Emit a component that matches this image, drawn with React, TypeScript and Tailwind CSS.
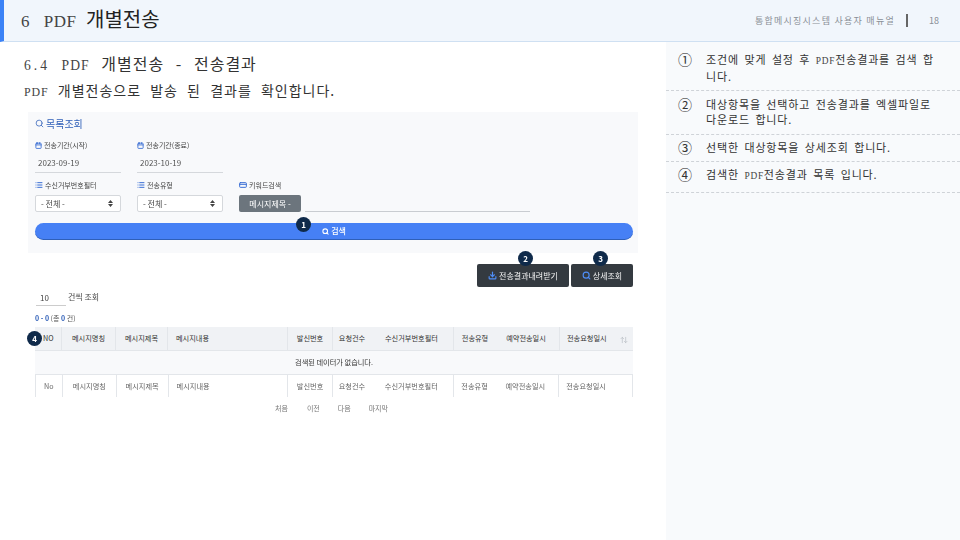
import { Calendar, List, Search, Download, CreditCard, ArrowUpDown } from "lucide-react";

const SANS = "font-['Noto_Sans_CJK_KR',sans-serif]";

const notes = [
  { mark: "①", lines: [["조건에 맞게 설정 후 ", "PDF", "전송결과를 검색 합"], ["니다."]], cls: "h-[49px] pt-[10px]" },
  { mark: "②", lines: [["대상항목을 선택하고 전송결과를 엑셀파일로"], ["다운로드 합니다."]], cls: "h-[44px] pt-[6px]" },
  { mark: "③", lines: [["선택한 대상항목을 상세조회 합니다."]], cls: "h-[27px] pt-[5px]" },
  { mark: "④", lines: [["검색한 ", "PDF", "전송결과 목록 입니다."]], cls: "h-[31px] pt-[5px]" },
];

const columns = [
  { label: "NO", row: "No", cls: "w-[27px] pl-[8px]", line: true },
  { label: "메시지명칭", row: "메시지명칭", cls: "w-[54px] justify-center", line: true },
  { label: "메시지제목", row: "메시지제목", cls: "w-[52px] justify-center", line: true },
  { label: "메시지내용", row: "메시지내용", cls: "w-[120px] pl-[8px]", line: true },
  { label: "발신번호", row: "발신번호", cls: "w-[45px] justify-center", line: true },
  { label: "요청건수", row: "요청건수", cls: "w-[38px] justify-center", line: false },
  { label: "수신거부번호필터", row: "수신거부번호필터", cls: "w-[83px] pl-[14px]", line: true },
  { label: "전송유형", row: "전송유형", cls: "w-[42px] justify-center", line: false },
  { label: "예약전송일시", row: "예약전송일시", cls: "w-[64px] justify-center pr-[3px]", line: true },
  { label: "전송요청일시", row: "전송요청일시", cls: "w-[73px] pl-[7px]", line: false },
];

// latin runs in the headings use a small, light typewriter look
function Latin({ children, className = "tracking-[0.08em] [word-spacing:0.6em]" }: { children: React.ReactNode; className?: string }) {
  return <span className={`font-['Liberation_Serif',serif] text-[0.85em] text-[#444] ${className}`}>{children}</span>;
}

function Badge({ n, className }: { n: number; className: string }) {
  return (
    <span
      className={`absolute flex h-[15px] w-[15px] items-center justify-center rounded-full bg-[#0f2a4a] text-[8px] font-bold text-white ${className}`}
    >
      {n}
    </span>
  );
}

function FieldLabel({ icon, text }: { icon: React.ReactNode; text: string }) {
  return (
    <div className="flex h-[10px] items-center gap-[2px] text-[7px] leading-none text-[#444]">
      {icon}
      <span>{text}</span>
    </div>
  );
}

function DateField({ label, value }: { label: string; value: string }) {
  return (
    <div className="w-[86px]">
      <FieldLabel icon={<Calendar size={7} strokeWidth={3} className="text-[#3b6fd4]" />} text={label} />
      <div className="mt-[8px] h-[15px] border-b border-[#d5d8dc] pl-[3px] text-[8px] leading-[10px] text-[#555]">
        {value}
      </div>
    </div>
  );
}

function SelectField({ label }: { label: string }) {
  return (
    <div className="w-[86px]">
      <FieldLabel icon={<List size={8} strokeWidth={3} className="text-[#3b6fd4]" />} text={label} />
      <div className="mt-[5px] flex h-[17px] items-center justify-between rounded-[2px] border border-[#d5d8dc] bg-white px-[5px] text-[8px] text-[#444]">
        <span>- 전체 -</span>
        <svg width="5" height="7" viewBox="0 0 5 7" className="mr-[2px] fill-[#444]">
          <path d="M2.5 0 5 3H0zM2.5 7 0 4h5z" />
        </svg>
      </div>
    </div>
  );
}

function DarkButton({ icon, text, className }: { icon: React.ReactNode; text: string; className: string }) {
  return (
    <div
      className={`flex h-[23px] items-center justify-center gap-[2px] rounded-[2px] bg-[#343a40] text-[8px] text-[#f4f4f4] ${className}`}
    >
      {icon}
      <span>{text}</span>
    </div>
  );
}

function Row({ cell, className }: { cell: "label" | "row"; className: string }) {
  return (
    <div className={`flex border-b border-[#e3e6ea] ${className}`}>
      {columns.map((c) => (
        <div
          key={c.label}
          className={`flex items-center whitespace-nowrap ${c.cls} ${c.line ? "border-r border-[#e3e6ea]" : ""}`}
        >
          {c[cell]}
        </div>
      ))}
    </div>
  );
}

export default function App() {
  return (
    <div className={`flex h-[540px] w-[960px] flex-col overflow-hidden bg-white ${SANS}`}>
      <header className="flex h-[42px] shrink-0 items-center border-b border-[#cfe0f2] border-l-4 border-l-[#3b82f6] bg-[#f1f6fc]">
        <h1 className="ml-[17px] pb-[2px] text-[20px] leading-none text-[#222] [word-spacing:5px]">
          <Latin className="tracking-[0.03em] [word-spacing:9px]">6 PDF</Latin> 개별전송
        </h1>
        <div className="ml-auto flex items-center text-[9px] text-[#8a8f96]">
          <span className="tracking-[1.26px]">통합메시징시스템 사용자 매뉴얼</span>
          <span className="ml-[11px] mr-[9px] h-[13px] w-[2px] bg-[#666]" />
          <span className="ml-[12px] mr-[21px]">18</span>
        </div>
      </header>

      <div className="flex min-h-0 flex-1">
        <main className="w-[666px] shrink-0">
          <div className="pl-[24px] pt-[11px] text-[#333]">
            <h2 className="h-[20px] text-[16px] leading-[20px] tracking-[1px] [word-spacing:7px] whitespace-nowrap">
              <Latin className="tracking-[0.22em] [word-spacing:0.1em]">6.4</Latin>{" "}
              <Latin>PDF</Latin> 개별전송 - 전송결과
            </h2>
            <p className="mt-[8px] h-[18px] text-[14px] leading-[18px] tracking-[1px] [word-spacing:5px] whitespace-nowrap">
              <Latin>PDF</Latin> 개별전송으로 발송 된 결과를 확인합니다.
            </p>
          </div>

          <section className="relative ml-[28px] mt-[13px] h-[141px] w-[610px] bg-[#f8f9fb] pl-[7px] pt-[5px] blur-[0.3px]">
            <div className="flex h-[13px] items-center gap-[2px] text-[10px] text-[#2f5fb8]">
              <Search size={9} />
              <span>목록조회</span>
            </div>
            <div className="mt-[10px] flex gap-[16px]">
              <DateField label="전송기간(시작)" value="2023-09-19" />
              <DateField label="전송기간(종료)" value="2023-10-19" />
            </div>
            <div className="mt-[7px] flex gap-[16px]">
              <SelectField label="수신거부번호필터" />
              <SelectField label="전송유형" />
              <div className="flex-1">
                <FieldLabel icon={<CreditCard size={8} strokeWidth={3} className="text-[#3b6fd4]" />} text="키워드검색" />
                <div className="mt-[5px] flex items-end gap-[4px]">
                  <div className="flex h-[17px] w-[62px] items-center justify-center rounded-[2px] bg-[#6c757d] text-[8px] text-white">
                    메시지제목 -
                  </div>
                  <div className="h-px w-[225px] bg-[#c9ccd1]" />
                </div>
              </div>
            </div>
            <div className="mt-[11px] flex h-[17px] w-[598px] items-center justify-center gap-[2px] rounded-full border-b border-[#2f5fb8] bg-[#4680f5] text-[8px] font-medium text-white">
              <Search size={7} strokeWidth={3.5} />
              <span>검색</span>
            </div>
            <Badge n={1} className="left-[268px] top-[105px]" />
          </section>

          <div className="relative ml-[35px] w-[598px] blur-[0.3px]">
            <div className="flex justify-end gap-[2px] pt-[11px]">
              <DarkButton
                icon={<Download size={9} strokeWidth={3} className="text-[#4f8ef7]" />}
                text="전송결과내려받기"
                className="w-[92px]"
              />
              <DarkButton
                icon={<Search size={9} strokeWidth={3} className="text-[#4f8ef7]" />}
                text="상세조회"
                className="w-[62px]"
              />
            </div>
            <Badge n={2} className="left-[483px] top-[-2px]" />
            <Badge n={3} className="left-[558px] top-[-2px]" />

            <div className="mt-[3px] flex items-start text-[8px] text-[#444]">
              <div className="ml-[1px] h-[16px] w-[30px] border-b border-[#ccc] pl-[4px] leading-[16px]">10</div>
              <span className="ml-[2px] leading-[14px]">건씩 조회</span>
            </div>
            <div className="mt-[7px] h-[10px] text-[7px] leading-[10px] text-[#555]">
              <span className="font-bold text-[#2f5fb8]">0 - 0</span> (총 <span className="font-bold text-[#2f5fb8]">0</span> 건)
            </div>

            <div className="mt-[4px] text-[7.2px]">
              <div className="relative">
                <Row cell="label" className="h-[24px] bg-[#f0f2f5] text-[#333]" />
                <ArrowUpDown size={8} className="absolute right-[5px] top-[9px] text-[#b8bcc2]" />
              </div>
              <div className="flex h-[24px] items-center justify-center border-b border-[#e3e6ea] bg-[#f8f9fb] text-[#333]">
                <span>검색된 데이터가 없습니다.</span>
              </div>
              <Row cell="row" className="h-[22px] border-x border-b-0 text-[#666]" />
            </div>
            <Badge n={4} className="left-[-8px] top-[78px]" />

            <div className="mt-[3px] flex h-[16px] items-center text-[7px] text-[#777]">
              <span className="ml-[240px]">처음</span>
              <span className="ml-[19px]">이전</span>
              <span className="ml-[18px]">다음</span>
              <span className="ml-[18px]">마지막</span>
            </div>
          </div>
        </main>

        <aside className="flex-1 bg-[#f8fafc] text-[#333]">
          {notes.map((note) => (
            <div
              key={note.mark}
              className={`flex border-b border-dashed border-[#cfd3d8] text-[11px] leading-[15px] tracking-[0.85px] [word-spacing:2.2px] ${note.cls}`}
            >
              <span className="w-[40px] pl-[12px] text-[14px] leading-[15px] tracking-normal text-[#333]">{note.mark}</span>
              <div>
                {note.lines.map((parts) => (
                  <div key={parts.join("")} className="whitespace-nowrap">
                    {parts.map((part) => (part === "PDF" ? <Latin key={part}>{part}</Latin> : <span key={part}>{part}</span>))}
                  </div>
                ))}
              </div>
            </div>
          ))}
        </aside>
      </div>
    </div>
  );
}
